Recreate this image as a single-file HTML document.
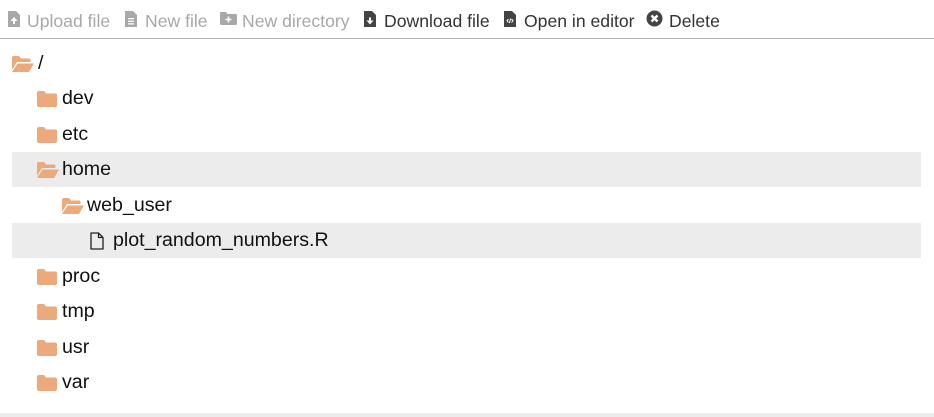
<!DOCTYPE html>
<html><head><style>
body{margin:0;width:934px;height:417px;overflow:hidden;background:#fff;font-family:"Liberation Sans",Arial,sans-serif;position:relative}
.tb{position:absolute;top:0;left:0;right:0;height:38px;border-bottom:1px solid #b0b0b0}
.tb span{position:absolute;top:11px;font-size:17.6px;line-height:20px;white-space:nowrap}
.dis{color:#a8a8a8}.en{color:#333}
.tb svg{position:absolute;top:11px}
.row{position:absolute;left:12px;width:909px;height:35px}
.hl{background:#ececec}
.row span{position:absolute;top:7px;font-size:19.6px;line-height:21px;color:#111}
.row svg{position:absolute}
.bot{position:absolute;left:0;right:0;top:413px;height:4px;background:#ececec}
</style></head><body>
<div class="tb">
<svg style="left:8px" width="12" height="16" viewBox="0 0 12 16"><path d="M0 0h8l4 4v12H0z" fill="#a8a8a8"/><path d="M6 6l-3.5 4H5v3h2v-3h2.5z" fill="#fff"/></svg>
<span class="dis" style="left:27px">Upload file</span>
<svg style="left:125px" width="12" height="16" viewBox="0 0 12 16"><path d="M0 0h8l4 4v12H0z" fill="#a8a8a8"/><path d="M3 7h6v1.3H3zM3 9.6h6v1.3H3zM3 12.2h6v1.3H3z" fill="#fff"/></svg>
<span class="dis" style="left:145px">New file</span>
<svg style="left:220px;top:12px" width="17" height="13" viewBox="0 0 17 13"><path d="M0 1.5Q0 0 1.5 0H6l1.5 2H15.5Q17 2 17 3.5V11.5Q17 13 15.5 13H1.5Q0 13 0 11.5z" fill="#a8a8a8"/><path d="M7.7 4.5h1.6v2.2h2.2v1.6H9.3v2.2H7.7V8.3H5.5V6.7h2.2z" fill="#fff"/></svg>
<span class="dis" style="left:242px">New directory</span>
<svg style="left:364px" width="12" height="16" viewBox="0 0 12 16"><path d="M0 0h8l4 4v12H0z" fill="#444"/><path d="M6 13.5l-3.5-4H5v-3h2v3h2.5z" fill="#fff"/></svg>
<span class="en" style="left:384px">Download file</span>
<svg style="left:504px" width="12" height="16" viewBox="0 0 12 16"><path d="M0 0h8l4 4v12H0z" fill="#444"/><path d="M4.5 8L3 9.8l1.5 1.8M7.5 8L9 9.8l-1.5 1.8M6.6 7.6l-1.2 4.4" stroke="#fff" stroke-width="1" fill="none"/></svg>
<span class="en" style="left:524px">Open in editor</span>
<svg style="left:646px;top:10px" width="17" height="17" viewBox="0 0 17 17"><circle cx="8.5" cy="8.5" r="8" fill="#444"/><path d="M5.5 5.5l6 6M11.5 5.5l-6 6" stroke="#fff" stroke-width="2.4"/></svg>
<span class="en" style="left:669px">Delete</span>
</div>

<svg width="0" height="0" style="position:absolute"><defs>
<symbol id="fc" viewBox="0 0 20 16"><path d="M0 2Q0 0 2 0H7l2 2.5H18Q20 2.5 20 4.5V14Q20 16 18 16H2Q0 16 0 14z" fill="#eba97c"/></symbol>
<symbol id="fo" viewBox="0 0 22 16"><path d="M0 2Q0 0 2 0H7l2 2.5H17Q18.5 2.5 18.5 4V6H5L0 14z" fill="#eba97c"/><path d="M5.5 7.5H22L17 16H0z" fill="#eba97c"/></symbol>
</defs></svg>

<div class="row" style="top:46px"><svg style="left:0;top:10px" width="22" height="16"><use href="#fo"/></svg><span style="left:26px">/</span></div>
<div class="row" style="top:81px"><svg style="left:25px;top:10px" width="20" height="16"><use href="#fc"/></svg><span style="left:50px">dev</span></div>
<div class="row" style="top:117px"><svg style="left:25px;top:10px" width="20" height="16"><use href="#fc"/></svg><span style="left:50px">etc</span></div>
<div class="row hl" style="top:152px"><svg style="left:25px;top:10px" width="22" height="16"><use href="#fo"/></svg><span style="left:50px">home</span></div>
<div class="row" style="top:188px"><svg style="left:50px;top:10px" width="22" height="16"><use href="#fo"/></svg><span style="left:75px">web_user</span></div>
<div class="row hl" style="top:223px"><svg style="left:78px;top:9px" width="14" height="18" viewBox="0 0 14 18"><path d="M1 1h7.5L13 5.5V17H1z M8.5 1v4.5H13" fill="none" stroke="#222" stroke-width="1.3" stroke-linejoin="round"/></svg><span style="left:101px">plot_random_numbers.R</span></div>
<div class="row" style="top:259px"><svg style="left:25px;top:10px" width="20" height="16"><use href="#fc"/></svg><span style="left:50px">proc</span></div>
<div class="row" style="top:294px"><svg style="left:25px;top:10px" width="20" height="16"><use href="#fc"/></svg><span style="left:50px">tmp</span></div>
<div class="row" style="top:330px"><svg style="left:25px;top:10px" width="20" height="16"><use href="#fc"/></svg><span style="left:50px">usr</span></div>
<div class="row" style="top:365px"><svg style="left:25px;top:10px" width="20" height="16"><use href="#fc"/></svg><span style="left:50px">var</span></div>
<div class="bot"></div>
</body></html>
